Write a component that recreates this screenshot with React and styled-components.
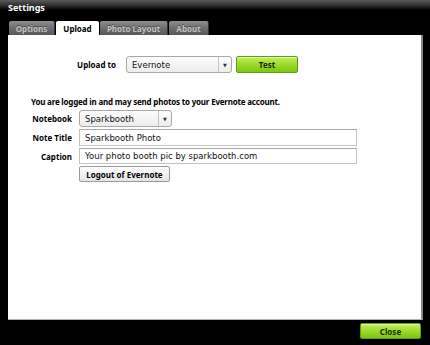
import React from "react";
import styled, { createGlobalStyle } from "styled-components";

const Global = createGlobalStyle`
  html, body { margin: 0; padding: 0; background: #000; }
  body { width: 430px; height: 345px; overflow: hidden; font-family: "DejaVu Sans", Verdana, sans-serif; }
`;

const boldFont = `"Noto Sans", "DejaVu Sans", sans-serif`;

const Window = styled.div`
  width: 430px;
  height: 345px;
  background: #000;
  display: flex;
  flex-direction: column;
`;

const TitleBar = styled.div`
  height: 21px;
  flex: none;
  box-sizing: border-box;
  padding: 2px 0 0 8px;
  background: linear-gradient(#5a5a5a 0px, #2a2a2a 6px, #000 10px, #000 100%);
  color: #fff;
  font-family: ${boldFont};
  font-weight: bold;
  font-size: 9px;
  line-height: 12px;
`;

const Tabs = styled.div`
  display: flex;
  gap: 1px;
  padding-left: 9px;
  height: 14px;
  flex: none;
`;

const Tab = styled.div`
  width: ${(p) => p.w}px;
  box-sizing: border-box;
  border-radius: 2px 2px 0 0;
  display: flex;
  align-items: center;
  justify-content: center;
  font-family: ${boldFont};
  font-size: 8px;
  font-weight: bold;
  color: ${(p) => (p.active ? "#000" : "#c4c4c4")};
  background: ${(p) =>
    p.active ? "#fff" : "linear-gradient(#8e8e8e, #6e6e6e 50%, #585858)"};
  text-shadow: ${(p) => (p.active ? "none" : "0 -1px 0 #4a4a4a")};
  border-right: ${(p) => (p.active ? "none" : "1px solid #333")};
`;

const Panel = styled.div`
  margin-left: 8px;
  width: 413px;
  height: 284px;
  flex: none;
  background: #fff;
  border-right: 2px solid #8a8a8a;
  border-bottom: 1px solid #b0b0b0;
  box-sizing: content-box;
  display: flex;
  flex-direction: column;
`;

const UploadRow = styled.div`
  display: flex;
  align-items: center;
  gap: 4px;
  padding: 21px 0 0 62px;
  height: 17px;
`;

const Label = styled.div`
  font-family: ${boldFont};
  font-size: 8px;
  font-weight: bold;
  color: #000;
  text-align: right;
  white-space: nowrap;
`;

const UploadLabel = styled(Label)`
  width: 46px;
  margin-right: 6px;
`;

const Select = styled.div`
  width: ${(p) => p.w}px;
  height: 17px;
  box-sizing: border-box;
  border: 1px solid #a8a8a8;
  border-radius: 3px;
  background: linear-gradient(#fdfdfd, #ececec);
  display: flex;
  align-items: stretch;
  font-size: 8.5px;
  color: #111;
`;

const SelectText = styled.div`
  flex: 1;
  display: flex;
  align-items: center;
  padding-left: 5px;
`;

const SelectArrow = styled.div`
  width: 12px;
  border-left: 1px solid #c4c4c4;
  display: flex;
  align-items: center;
  justify-content: center;
  font-size: 5px;
  color: #333;
`;

const GreenButton = styled.div`
  width: ${(p) => p.w}px;
  height: ${(p) => p.h}px;
  box-sizing: border-box;
  border: 1px solid #5f9e12;
  border-radius: 2px;
  background: linear-gradient(#c4f05a, #9ada2a 50%, #7cc614 100%);
  display: flex;
  align-items: center;
  justify-content: center;
  font-family: ${boldFont};
  font-size: 8px;
  font-weight: bold;
  color: #1c2a08;
  box-shadow: inset 0 1px 0 rgba(255, 255, 255, 0.5);
`;

const Message = styled.div`
  margin: 23px 0 0 23px;
  font-family: ${boldFont};
  font-size: 8px;
  font-weight: bold;
  letter-spacing: -0.2px;
  color: #000;
  height: 11px;
  line-height: 11px;
  white-space: nowrap;
`;

const Form = styled.div`
  display: grid;
  grid-template-columns: 64px 278px;
  column-gap: 7px;
  row-gap: 2px;
  margin: 3px 0 0 0;
  align-items: center;
`;

const Input = styled.div`
  height: ${(p) => p.h || 17}px;
  box-sizing: border-box;
  border: 1px solid #c2c2c2;
  border-top-color: #a8a8a8;
  background: #fff;
  display: flex;
  align-items: center;
  padding-left: 5px;
  font-size: 8.5px;
  color: #111;
  white-space: nowrap;
`;

const Button = styled.div`
  width: 91px;
  height: 16px;
  box-sizing: border-box;
  border: 1px solid #9a9a9a;
  border-radius: 2px;
  background: linear-gradient(#ffffff, #e4e4e4);
  display: flex;
  align-items: center;
  justify-content: center;
  font-family: ${boldFont};
  font-size: 8px;
  font-weight: bold;
  color: #000;
  white-space: nowrap;
`;

const Footer = styled.div`
  display: flex;
  justify-content: flex-end;
  padding: 3px 9px 0 0;
`;

export default function App() {
  return (
    <>
      <Global />
      <Window>
        <TitleBar>Settings</TitleBar>
        <Tabs>
          <Tab w={46}>Options</Tab>
          <Tab w={43} active>
            Upload
          </Tab>
          <Tab w={68}>Photo Layout</Tab>
          <Tab w={40}>About</Tab>
        </Tabs>
        <Panel>
          <UploadRow>
            <UploadLabel>Upload to</UploadLabel>
            <Select w={106}>
              <SelectText>Evernote</SelectText>
              <SelectArrow>▼</SelectArrow>
            </Select>
            <GreenButton w={62} h={17}>
              Test
            </GreenButton>
          </UploadRow>
          <Message>
            You are logged in and may send photos to your Evernote account.
          </Message>
          <Form>
            <Label>Notebook</Label>
            <Select w={93}>
              <SelectText>Sparkbooth</SelectText>
              <SelectArrow>▼</SelectArrow>
            </Select>
            <Label>Note Title</Label>
            <Input>Sparkbooth Photo</Input>
            <Label>Caption</Label>
            <Input h={16}>Your photo booth pic by sparkbooth.com</Input>
            <div />
            <Button>Logout of Evernote</Button>
          </Form>
        </Panel>
        <Footer>
          <GreenButton w={61} h={16}>
            Close
          </GreenButton>
        </Footer>
      </Window>
    </>
  );
}
